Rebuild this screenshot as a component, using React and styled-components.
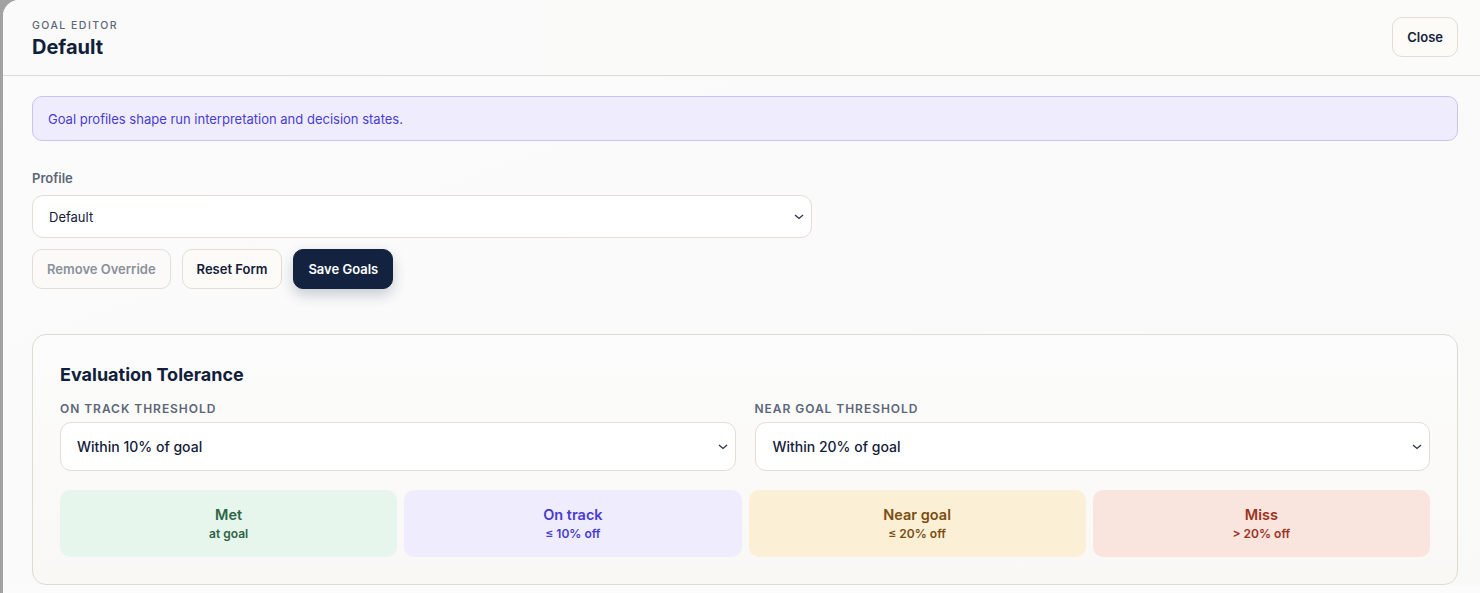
import React from 'react'
import styled, { createGlobalStyle } from 'styled-components'

const GlobalStyle = createGlobalStyle`
  html, body {
    margin: 0;
    padding: 0;
    background: #a2a2a2;
    font-family: Inter, 'Noto Sans', 'Liberation Sans', sans-serif;
    -webkit-font-smoothing: antialiased;
  }
  * { box-sizing: border-box; }
`

// modal sheet sitting over a dimmed page
const Sheet = styled.div`
  margin-left: 3px;
  height: 620px;
  background: #fbfbfb;
  border-top-left-radius: 16px;
  overflow: hidden;
`

const Header = styled.div`
  height: 76px;
  display: flex;
  justify-content: space-between;
  align-items: flex-start;
  padding: 17px 22px 0 29px;
  border-bottom: 1px solid #dcd9d2;
  background: linear-gradient(90deg, #fafafa, #fbfbfa);
`

const Eyebrow = styled.div`
  margin-top: 2px;
  font-size: 10.5px;
  font-weight: 500;
  letter-spacing: 0.14em;
  color: #5d6678;
  text-transform: uppercase;
  line-height: 14px;
`

const Title = styled.h1`
  margin: 1px 0 0;
  font-size: 20px;
  font-weight: 700;
  color: #10203b;
  line-height: 26px;
`

const Button = styled.button`
  font-family: inherit;
  font-size: 13px;
  font-weight: 600;
  height: 40px;
  padding: 0 14px;
  border-radius: 10px;
  cursor: pointer;
  border: 1px solid ${p => (p.$primary ? '#13233f' : '#e2ded5')};
  background: ${p => (p.$primary ? '#13233f' : p.$muted ? '#fbfaf8' : '#fcfbf8')};
  color: ${p => (p.$primary ? '#ffffff' : p.$muted ? '#8a909c' : '#13203a')};
  box-shadow: ${p => (p.$primary ? '0 6px 14px rgba(19, 35, 63, 0.22)' : 'none')};
`

const Body = styled.div`
  padding: 20px 22px 0 29px;
  background: linear-gradient(160deg, #fbfbfb 0%, #fafafa 60%, #f9f9f8 100%);
`

const Notice = styled.div`
  height: 45px;
  display: flex;
  align-items: center;
  padding: 0 15px;
  border: 1px solid #c9c3f3;
  border-radius: 10px;
  background: #efecfd;
  color: #4a3ed0;
  font-size: 13px;
`

const Field = styled.div`
  margin-top: 29px;
`

const FieldLabel = styled.div`
  font-size: 13px;
  font-weight: 600;
  color: #5d6678;
  line-height: 16px;
  margin-bottom: 9px;
`

const SelectBox = styled.div`
  position: relative;
  width: ${p => p.$width || '100%'};
  height: ${p => p.$h}px;
  display: flex;
  align-items: center;
  padding-left: ${p => p.$pl}px;
  background: #ffffff;
  border: 1px solid #e2ded5;
  border-radius: 11px;
  font-size: ${p => p.$fs}px;
  font-weight: ${p => p.$fw || 400};
  color: #14203a;
`

const Chevron = styled.svg`
  position: absolute;
  right: 4px;
  top: 50%;
  margin-top: -4px;
`

const Actions = styled.div`
  display: flex;
  gap: 11px;
  margin-top: 11px;
`

const Card = styled.section`
  margin-top: 45px;
  border: 1px solid #dedbd3;
  border-radius: 14px;
  padding: 28px 27px 27px;
  background: linear-gradient(180deg, #fcfcfc 0%, #f9f8f5 100%);
`

const CardTitle = styled.h2`
  margin: 0;
  font-size: 18px;
  font-weight: 700;
  color: #10203b;
  line-height: 24px;
`

const Thresholds = styled.div`
  display: grid;
  grid-template-columns: 1fr 1fr;
  gap: 19px;
  margin-top: 14px;
`

const CapsLabel = styled.div`
  font-size: 12px;
  font-weight: 600;
  letter-spacing: 0.08em;
  text-transform: uppercase;
  color: #5d6678;
  line-height: 16px;
  margin-bottom: 5px;
`

const Tiles = styled.div`
  display: grid;
  grid-template-columns: repeat(4, 1fr);
  gap: 7px;
  margin-top: 19px;
`

const tones = {
  met: { bg: '#e6f6ec', fg: '#2d6446' },
  track: { bg: '#efecfd', fg: '#463ccf' },
  near: { bg: '#fbf0d6', fg: '#7a4e12' },
  miss: { bg: '#f9e4de', fg: '#9a3320' },
}

const Tile = styled.div`
  height: 67px;
  border-radius: 10px;
  display: flex;
  flex-direction: column;
  align-items: center;
  justify-content: center;
  background: ${p => tones[p.$tone].bg};
  color: ${p => tones[p.$tone].fg};
`

const TileName = styled.div`
  font-size: 14.5px;
  font-weight: 600;
  line-height: 18px;
`

const TileSub = styled.div`
  font-size: 12px;
  font-weight: 600;
  line-height: 16px;
  margin-top: 2px;
`

function Select({ value, h, pl, fs, fw, width }) {
  return (
    <SelectBox $h={h} $pl={pl} $fs={fs} $fw={fw} $width={width}>
      {value}
      <Chevron width="16" height="8" viewBox="0 0 16 8">
        <path d="M4 2 L8 5.5 L12 2" fill="none" stroke="#2a3346" strokeWidth="1.3" />
      </Chevron>
    </SelectBox>
  )
}

const tiles = [
  { tone: 'met', name: 'Met', sub: 'at goal' },
  { tone: 'track', name: 'On track', sub: '≤ 10% off' },
  { tone: 'near', name: 'Near goal', sub: '≤ 20% off' },
  { tone: 'miss', name: 'Miss', sub: '> 20% off' },
]

export default function App() {
  return (
    <>
      <GlobalStyle />
      <Sheet>
        <Header>
          <div>
            <Eyebrow>Goal Editor</Eyebrow>
            <Title>Default</Title>
          </div>
          <Button>Close</Button>
        </Header>
        <Body>
          <Notice>Goal profiles shape run interpretation and decision states.</Notice>

          <Field>
            <FieldLabel>Profile</FieldLabel>
            <Select value="Default" h={43} pl={16} fs={13} width="780px" />
          </Field>

          <Actions>
            <Button $muted>Remove Override</Button>
            <Button>Reset Form</Button>
            <Button $primary>Save Goals</Button>
          </Actions>

          <Card>
            <CardTitle>Evaluation Tolerance</CardTitle>
            <Thresholds>
              <div>
                <CapsLabel>On track threshold</CapsLabel>
                <Select value="Within 10% of goal" h={49} pl={16} fs={14} fw={500} />
              </div>
              <div>
                <CapsLabel>Near goal threshold</CapsLabel>
                <Select value="Within 20% of goal" h={49} pl={17} fs={14} fw={500} />
              </div>
            </Thresholds>
            <Tiles>
              {tiles.map(t => (
                <Tile key={t.tone} $tone={t.tone}>
                  <TileName>{t.name}</TileName>
                  <TileSub>{t.sub}</TileSub>
                </Tile>
              ))}
            </Tiles>
          </Card>
        </Body>
      </Sheet>
    </>
  )
}
